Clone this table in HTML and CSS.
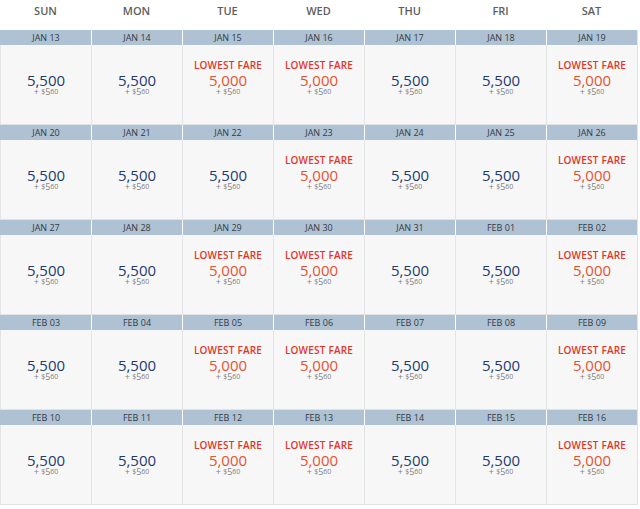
FILE: index.html
```html
<!DOCTYPE html>
<html lang="en">
<head>
<meta charset="utf-8">
<title>Fare Calendar</title>
<link rel="stylesheet" href="styles.css">
</head>
<body>
<div class="calendar">
  <div class="days">
    <div class="dayname">SUN</div><div class="dayname">MON</div><div class="dayname">TUE</div><div class="dayname">WED</div><div class="dayname">THU</div><div class="dayname">FRI</div><div class="dayname">SAT</div>
  </div>

  <div class="week">
    <div class="day"><div class="date">JAN 13</div><div class="body"><div class="tag"></div><div class="price">5,500</div><div class="fee">+ <span class="sup">$</span>5<span class="sup">60</span></div></div></div>
    <div class="day"><div class="date">JAN 14</div><div class="body"><div class="tag"></div><div class="price">5,500</div><div class="fee">+ <span class="sup">$</span>5<span class="sup">60</span></div></div></div>
    <div class="day low"><div class="date">JAN 15</div><div class="body"><div class="tag">LOWEST FARE</div><div class="price">5,000</div><div class="fee">+ <span class="sup">$</span>5<span class="sup">60</span></div></div></div>
    <div class="day low"><div class="date">JAN 16</div><div class="body"><div class="tag">LOWEST FARE</div><div class="price">5,000</div><div class="fee">+ <span class="sup">$</span>5<span class="sup">60</span></div></div></div>
    <div class="day"><div class="date">JAN 17</div><div class="body"><div class="tag"></div><div class="price">5,500</div><div class="fee">+ <span class="sup">$</span>5<span class="sup">60</span></div></div></div>
    <div class="day"><div class="date">JAN 18</div><div class="body"><div class="tag"></div><div class="price">5,500</div><div class="fee">+ <span class="sup">$</span>5<span class="sup">60</span></div></div></div>
    <div class="day low"><div class="date">JAN 19</div><div class="body"><div class="tag">LOWEST FARE</div><div class="price">5,000</div><div class="fee">+ <span class="sup">$</span>5<span class="sup">60</span></div></div></div>
  </div>

  <div class="week">
    <div class="day"><div class="date">JAN 20</div><div class="body"><div class="tag"></div><div class="price">5,500</div><div class="fee">+ <span class="sup">$</span>5<span class="sup">60</span></div></div></div>
    <div class="day"><div class="date">JAN 21</div><div class="body"><div class="tag"></div><div class="price">5,500</div><div class="fee">+ <span class="sup">$</span>5<span class="sup">60</span></div></div></div>
    <div class="day"><div class="date">JAN 22</div><div class="body"><div class="tag"></div><div class="price">5,500</div><div class="fee">+ <span class="sup">$</span>5<span class="sup">60</span></div></div></div>
    <div class="day low"><div class="date">JAN 23</div><div class="body"><div class="tag">LOWEST FARE</div><div class="price">5,000</div><div class="fee">+ <span class="sup">$</span>5<span class="sup">60</span></div></div></div>
    <div class="day"><div class="date">JAN 24</div><div class="body"><div class="tag"></div><div class="price">5,500</div><div class="fee">+ <span class="sup">$</span>5<span class="sup">60</span></div></div></div>
    <div class="day"><div class="date">JAN 25</div><div class="body"><div class="tag"></div><div class="price">5,500</div><div class="fee">+ <span class="sup">$</span>5<span class="sup">60</span></div></div></div>
    <div class="day low"><div class="date">JAN 26</div><div class="body"><div class="tag">LOWEST FARE</div><div class="price">5,000</div><div class="fee">+ <span class="sup">$</span>5<span class="sup">60</span></div></div></div>
  </div>

  <div class="week">
    <div class="day"><div class="date">JAN 27</div><div class="body"><div class="tag"></div><div class="price">5,500</div><div class="fee">+ <span class="sup">$</span>5<span class="sup">60</span></div></div></div>
    <div class="day"><div class="date">JAN 28</div><div class="body"><div class="tag"></div><div class="price">5,500</div><div class="fee">+ <span class="sup">$</span>5<span class="sup">60</span></div></div></div>
    <div class="day low"><div class="date">JAN 29</div><div class="body"><div class="tag">LOWEST FARE</div><div class="price">5,000</div><div class="fee">+ <span class="sup">$</span>5<span class="sup">60</span></div></div></div>
    <div class="day low"><div class="date">JAN 30</div><div class="body"><div class="tag">LOWEST FARE</div><div class="price">5,000</div><div class="fee">+ <span class="sup">$</span>5<span class="sup">60</span></div></div></div>
    <div class="day"><div class="date">JAN 31</div><div class="body"><div class="tag"></div><div class="price">5,500</div><div class="fee">+ <span class="sup">$</span>5<span class="sup">60</span></div></div></div>
    <div class="day"><div class="date">FEB 01</div><div class="body"><div class="tag"></div><div class="price">5,500</div><div class="fee">+ <span class="sup">$</span>5<span class="sup">60</span></div></div></div>
    <div class="day low"><div class="date">FEB 02</div><div class="body"><div class="tag">LOWEST FARE</div><div class="price">5,000</div><div class="fee">+ <span class="sup">$</span>5<span class="sup">60</span></div></div></div>
  </div>

  <div class="week">
    <div class="day"><div class="date">FEB 03</div><div class="body"><div class="tag"></div><div class="price">5,500</div><div class="fee">+ <span class="sup">$</span>5<span class="sup">60</span></div></div></div>
    <div class="day"><div class="date">FEB 04</div><div class="body"><div class="tag"></div><div class="price">5,500</div><div class="fee">+ <span class="sup">$</span>5<span class="sup">60</span></div></div></div>
    <div class="day low"><div class="date">FEB 05</div><div class="body"><div class="tag">LOWEST FARE</div><div class="price">5,000</div><div class="fee">+ <span class="sup">$</span>5<span class="sup">60</span></div></div></div>
    <div class="day low"><div class="date">FEB 06</div><div class="body"><div class="tag">LOWEST FARE</div><div class="price">5,000</div><div class="fee">+ <span class="sup">$</span>5<span class="sup">60</span></div></div></div>
    <div class="day"><div class="date">FEB 07</div><div class="body"><div class="tag"></div><div class="price">5,500</div><div class="fee">+ <span class="sup">$</span>5<span class="sup">60</span></div></div></div>
    <div class="day"><div class="date">FEB 08</div><div class="body"><div class="tag"></div><div class="price">5,500</div><div class="fee">+ <span class="sup">$</span>5<span class="sup">60</span></div></div></div>
    <div class="day low"><div class="date">FEB 09</div><div class="body"><div class="tag">LOWEST FARE</div><div class="price">5,000</div><div class="fee">+ <span class="sup">$</span>5<span class="sup">60</span></div></div></div>
  </div>

  <div class="week">
    <div class="day"><div class="date">FEB 10</div><div class="body"><div class="tag"></div><div class="price">5,500</div><div class="fee">+ <span class="sup">$</span>5<span class="sup">60</span></div></div></div>
    <div class="day"><div class="date">FEB 11</div><div class="body"><div class="tag"></div><div class="price">5,500</div><div class="fee">+ <span class="sup">$</span>5<span class="sup">60</span></div></div></div>
    <div class="day low"><div class="date">FEB 12</div><div class="body"><div class="tag">LOWEST FARE</div><div class="price">5,000</div><div class="fee">+ <span class="sup">$</span>5<span class="sup">60</span></div></div></div>
    <div class="day low"><div class="date">FEB 13</div><div class="body"><div class="tag">LOWEST FARE</div><div class="price">5,000</div><div class="fee">+ <span class="sup">$</span>5<span class="sup">60</span></div></div></div>
    <div class="day"><div class="date">FEB 14</div><div class="body"><div class="tag"></div><div class="price">5,500</div><div class="fee">+ <span class="sup">$</span>5<span class="sup">60</span></div></div></div>
    <div class="day"><div class="date">FEB 15</div><div class="body"><div class="tag"></div><div class="price">5,500</div><div class="fee">+ <span class="sup">$</span>5<span class="sup">60</span></div></div></div>
    <div class="day low"><div class="date">FEB 16</div><div class="body"><div class="tag">LOWEST FARE</div><div class="price">5,000</div><div class="fee">+ <span class="sup">$</span>5<span class="sup">60</span></div></div></div>
  </div>
</div>
</body>
</html>
```

FILE: styles.css
```css
* { box-sizing: border-box; }

html, body {
  margin: 0;
  padding: 0;
  background: #ffffff;
}

body {
  font-family: "Open Sans", "Liberation Sans", sans-serif;
}

.calendar {
  width: 638px;
  display: flex;
  flex-direction: column;
}

.days {
  display: grid;
  grid-template-columns: repeat(7, 91px);
  height: 30px;
}

.dayname {
  padding-top: 4px;
  text-align: center;
  font-size: 11px;
  line-height: 14px;
  font-weight: 600;
  color: #5e5e5e;
}

.week {
  display: grid;
  grid-template-columns: repeat(7, 91px);
  border-right: 1px solid #e2e2e2;
  width: 638px;
}

.day {
  display: flex;
  flex-direction: column;
  height: 95px;
}

.date {
  height: 15px;
  line-height: 15px;
  font-size: 9px;
  text-align: center;
  color: #353a42;
  background: #aec2d4;
  border-left: 1px solid #ffffff;
}

.day:first-child .date {
  border-left-color: #aec2d4;
}

.body {
  flex: 1;
  background: #f7f7f7;
  border-left: 1px solid #e4e4e4;
  border-bottom: 1px solid #e2e2e2;
  padding-top: 14px;
  display: flex;
  flex-direction: column;
  align-items: center;
}

.tag {
  height: 13px;
  line-height: 13px;
  font-size: 10px;
  font-weight: 600;
  color: #e2352a;
  letter-spacing: 0.2px;
}

.price {
  font-size: 15px;
  line-height: 16px;
  color: #1d3b6f;
}

.low .price {
  color: #e6522f;
}

.fee {
  font-size: 9px;
  line-height: 8px;
  color: #808080;
  white-space: nowrap;
}

.sup {
  font-size: 7px;
  line-height: 0;
  vertical-align: 1.5px;
}
```
